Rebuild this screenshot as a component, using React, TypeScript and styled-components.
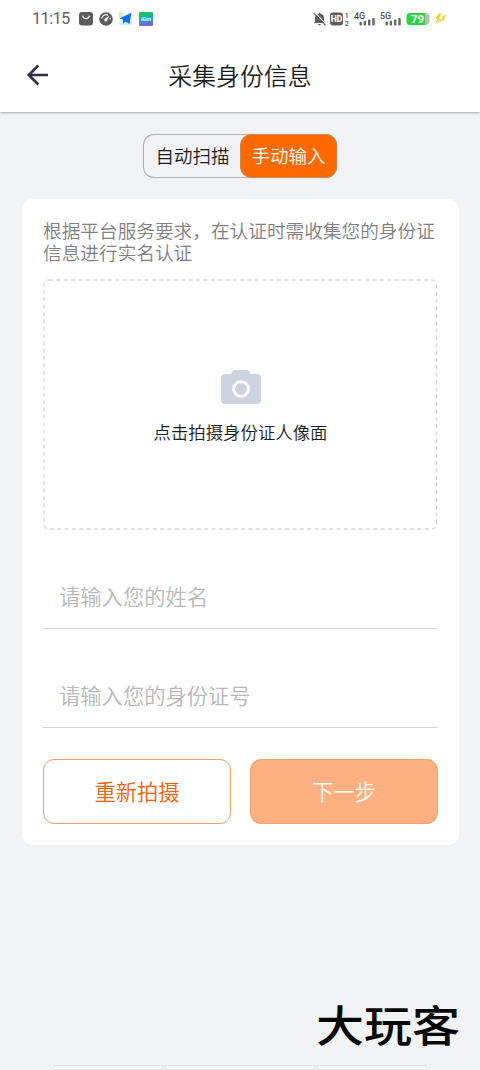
import React from 'react';
import styled, { createGlobalStyle } from 'styled-components';

const GlobalStyle = createGlobalStyle`
  * { box-sizing: border-box; }
  body {
    margin: 0;
    background: #f2f3f5;
    font-family: "Noto Sans CJK SC", sans-serif;
    font-weight: 350;
  }
  button, input { font-family: inherit; font-weight: inherit; padding: 0; margin: 0; }
`;

const Screen = styled.div`
  width: 480px;
  height: 1070px;
  display: flex;
  flex-direction: column;
  overflow: hidden;
  background: #f2f3f5;
`;

const TopArea = styled.div`
  flex: none;
  height: 112px;
  background: #fff;
  box-shadow: 0 1px 2px rgba(0, 0, 0, 0.3);
`;

const StatusBar = styled.div`
  height: 38px;
  padding: 0 32px;
  display: flex;
  align-items: center;
  justify-content: space-between;
`;

const StatusGroup = styled.div<{ $gap: number }>`
  display: flex;
  align-items: center;
  gap: ${(p) => p.$gap}px;
`;

const Clock = styled.span`
  width: 41px;
  font: 400 16.5px/20px Roboto, sans-serif;
  letter-spacing: -0.7px;
  color: #606060;
`;

const Header = styled.header`
  height: 74px;
  padding: 0 26px;
  display: grid;
  grid-template-columns: 24px 1fr 24px;
  align-items: center;
`;

const BackButton = styled.button`
  width: 24px;
  height: 24px;
  border: 0;
  background: none;
  svg { display: block; }
`;

const Title = styled.h1`
  margin: 0;
  text-align: center;
  font-size: 23.9px;
  line-height: 30px;
  font-weight: inherit;
  color: #1c1c1c;
`;

const Main = styled.main`
  flex: 1;
  padding: 22px 21px 0 22px;
  display: flex;
  flex-direction: column;
  align-items: center;
`;

const Tabs = styled.div`
  width: 194px;
  height: 44px;
  margin-right: 1px;
  display: flex;
  border-radius: 11px;
  box-shadow: inset 0 0 0 1px #b0b0b0;
`;

const Tab = styled.button<{ $active?: boolean }>`
  width: 97px;
  padding: 0 0 2px ${(p) => (p.$active ? 0 : 2)}px;
  border: ${(p) => (p.$active ? '1px solid #d98047' : '0')};
  border-radius: 11px;
  background: ${(p) => (p.$active ? '#ff6900' : 'transparent')};
  color: ${(p) => (p.$active ? '#fff' : '#1c1c1c')};
  font-size: 18.5px;
  line-height: 24px;
`;

const Card = styled.section`
  width: 437px;
  height: 646px;
  margin-top: 21px;
  padding: 20px 21px 0;
  border-radius: 11px;
  background: #fff;
`;

const Description = styled.p`
  margin: 0;
  width: 400px;
  font-size: 18.67px;
  line-height: 21.5px;
  color: #808080;
`;

const PhotoBox = styled.button`
  position: relative;
  display: flex;
  flex-direction: column;
  align-items: center;
  width: 395px;
  height: 251px;
  margin-top: 17px;
  padding-top: 91px;
  border: 0;
  background: none;
`;

const DashedFrame = styled.svg`
  position: absolute;
  inset: 0;
`;

const PhotoCaption = styled.span`
  margin-top: 15px;
  font-size: 17.4px;
  line-height: 24px;
  color: #1c1c1c;
`;

const Field = styled.input`
  display: block;
  width: 395px;
  height: 64px;
  margin-top: 35px;
  padding: 0 16px 2px;
  border: 0;
  border-bottom: 1px solid #d5d5d5;
  background: none;
  outline: none;
  font-size: 21.3px;
  &::placeholder { color: #b8b8b8; opacity: 1; }
`;

const Actions = styled.div`
  display: flex;
  justify-content: space-between;
  width: 395px;
  margin-top: 31px;
`;

const ActionButton = styled.button<{ $filled?: boolean }>`
  width: 188px;
  height: 65px;
  padding-bottom: 2px;
  border-radius: 11px;
  border: 1px solid ${(p) => (p.$filled ? '#f0a267' : '#eda066')};
  background: ${(p) => (p.$filled ? '#ffb080' : '#fff')};
  color: ${(p) => (p.$filled ? '#fff' : '#f56000')};
  font-size: 21.3px;
  line-height: 28px;
`;

const Footer = styled.footer`
  flex: none;
  height: 76px;
  display: flex;
  flex-direction: column;
  justify-content: space-between;
`;

const Brand = styled.div`
  align-self: flex-end;
  width: 147px;
  margin-right: 17px;
  height: 60px;
  font-size: 48px;
  line-height: 60px;
  font-weight: 500;
  white-space: nowrap;
  color: #080808;
  transform: translateY(-1px) scaleY(0.89);
`;

const Segments = styled.div`
  display: flex;
  gap: 1px;
  padding-left: 53px;
`;

const Segment = styled.div<{ $width: number }>`
  width: ${(p) => p.$width}px;
  height: 5px;
  border: 1px solid #e2e3e5;
  border-radius: 2px;
  background: #f6f7f8;
`;

const SignalIcon = ({ label }: { label: string }) => (
  <svg width="22" height="16" viewBox="0 0 22 16">
    <text x="0" y="7.5" fontFamily="Roboto" fontSize="9" fontWeight="500" fill="#555">{label}</text>
    <g fill="#666">
      <rect x="5.5" y="10.8" width="2.4" height="3.7" rx=".8" />
      <rect x="9.7" y="9.7" width="2.4" height="4.8" rx=".8" />
      <rect x="14" y="8.5" width="2.4" height="6" rx=".8" />
      <rect x="18.3" y="7" width="2.4" height="7.5" rx=".8" />
    </g>
  </svg>
);

export default function App() {
  return (
    <Screen>
      <GlobalStyle />
      <TopArea>
        <StatusBar>
          <StatusGroup $gap={6}>
            <Clock>11:15</Clock>
            <svg width="14" height="14" viewBox="0 0 14 14">
              <rect width="14" height="13.5" rx="3" fill="#5c5c5c" />
              <path d="M3.8 4.2c.7 3.2 5.7 3.2 6.4 0" fill="none" stroke="#fff" strokeWidth="1.4" strokeLinecap="round" />
            </svg>
            <svg width="14" height="14" viewBox="0 0 14 14">
              <circle cx="7" cy="7" r="6.8" fill="#5c5c5c" />
              <path d="M2.7 6.8A4.3 4.3 0 0 1 9 3.2M11.2 5.8v1.7" fill="none" stroke="#fff" strokeWidth="1.1" />
              <path d="M10.3 3.5 8 8.5a1.4 1.4 0 1 1-2-1.8Z" fill="#fff" />
            </svg>
            <svg width="14" height="14" viewBox="0 0 14 14">
              <path d="M0 0h5v6H0z" fill="#d0f7bd" />
              <path d="M0 9h13v4H0z" fill="#cdf2fb" />
              <path d="M12.5.8.7 6.2l3.2 1.5.3 4 2.3-2.3 4 2.5Z" fill="#126ff0" />
            </svg>
            <svg width="14" height="14" viewBox="0 0 14 14">
              <defs>
                <linearGradient id="app" x1=".5" y1="0" x2=".6" y2="1">
                  <stop offset="0" stopColor="#19cc50" />
                  <stop offset=".5" stopColor="#20a9b4" />
                  <stop offset="1" stopColor="#8a56e8" />
                </linearGradient>
              </defs>
              <rect width="14" height="14" rx="1" fill="url(#app)" />
              <text x="7" y="8.7" textAnchor="middle" fontFamily="Roboto" fontSize="5.5" fontWeight="700" fill="#e4fbff">iGm</text>
            </svg>
          </StatusGroup>
          <StatusGroup $gap={4}>
            <svg width="13" height="14" viewBox="0 0 13 14">
              <path d="M2 10V6a4.5 4.5 0 0 1 3.5-4.3 1 1 0 0 1 2 0A4.5 4.5 0 0 1 11 6v4l1 1H1Zm3 2h3c-.4 1.8-2.6 1.8-3 0Z" fill="#5e5e5e" />
              <path d="m1.7.2 12 13" stroke="#fff" strokeWidth="1.2" />
              <path d="m.5.8 12 12.6" stroke="#5e5e5e" strokeWidth="1.2" />
            </svg>
            <svg width="20" height="16" viewBox="0 0 20 16">
              <rect y="1.5" width="13" height="13" rx="3" fill="#5e5e5e" />
              <text x="6.5" y="11.3" textAnchor="middle" fontFamily="Roboto" fontSize="8.6" fontWeight="800" fill="#fff">HD</text>
              <text x="14.5" y="6.8" fontFamily="Roboto" fontSize="7.8" fontWeight="500" fill="#5e5e5e">1</text>
              <text x="14.5" y="15" fontFamily="Roboto" fontSize="7.8" fontWeight="500" fill="#5e5e5e">2</text>
            </svg>
            <SignalIcon label="4G" />
            <SignalIcon label="5G" />
            <svg width="24" height="14" viewBox="0 0 24 14">
              <rect x="3" y="1" width="20.5" height="12" rx="4" fill="#b9bdb9" />
              <path d="M4 1h15v12H4a3.5 3.5 0 0 1-3.5-3.5v-5A3.5 3.5 0 0 1 4 1Z" fill="#2dd33f" />
              <text x="11.5" y="11" textAnchor="middle" fontFamily="Roboto" fontSize="11.5" fontWeight="700" fill="#fff">79</text>
            </svg>
            <svg width="14" height="14" viewBox="0 0 14 14">
              <path d="M5 1.2 1.2 6.8h2.6L1 12.2 7 6.6H4.6L7.4 2ZM13.2 1.2 7.8 5.3l.5 1.2L2.5 12l8.2-4.8-.8-1.3Z" fill="#ffc81e" />
            </svg>
          </StatusGroup>
        </StatusBar>
        <Header>
          <BackButton aria-label="返回">
            <svg width="24" height="24" viewBox="0 0 24 24" fill="none" stroke="#2f3047" strokeWidth="2.6">
              <path d="M22 12H3M12.3 2.5 2.8 12l9.5 9.5" />
            </svg>
          </BackButton>
          <Title>采集身份信息</Title>
        </Header>
      </TopArea>
      <Main>
        <Tabs>
          <Tab>自动扫描</Tab>
          <Tab $active>手动输入</Tab>
        </Tabs>
        <Card>
          <Description>
            根据平台服务要求，在认证时需收集您的身份证
            <br />
            信息进行实名认证
          </Description>
          <PhotoBox>
            <DashedFrame width="395" height="251">
              <rect x="1" y="1" width="392.5" height="249" rx="5" fill="none" stroke="#d9dade" strokeWidth="1.3" strokeDasharray="4.2 3.15" />
            </DashedFrame>
            <svg width="40" height="35" viewBox="0 0 40 35">
              <path d="M4 4h6l1.4-2.5A3 3 0 0 1 14 0h12a3 3 0 0 1 2.6 1.5L30 4h6a4 4 0 0 1 4 4v22a4 4 0 0 1-4 4H4a4 4 0 0 1-4-4V8a4 4 0 0 1 4-4Z" fill="#ced3e2" />
              <circle cx="20" cy="19" r="7.4" fill="none" stroke="#fff" strokeWidth="2.8" />
            </svg>
            <PhotoCaption>点击拍摄身份证人像面</PhotoCaption>
          </PhotoBox>
          <Field placeholder="请输入您的姓名" />
          <Field placeholder="请输入您的身份证号" />
          <Actions>
            <ActionButton>重新拍摄</ActionButton>
            <ActionButton $filled>下一步</ActionButton>
          </Actions>
        </Card>
      </Main>
      <Footer>
        <Brand>大玩客</Brand>
        <Segments>
          <Segment $width={110} />
          <Segment $width={152} />
          <Segment $width={110} />
        </Segments>
      </Footer>
    </Screen>
  );
}
